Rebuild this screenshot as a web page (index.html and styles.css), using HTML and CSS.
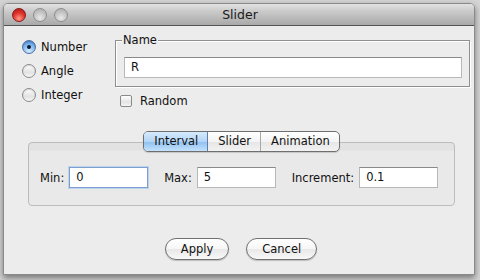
FILE: index.html
```html
<!DOCTYPE html>
<html>
<head>
<meta charset="utf-8">
<link rel="stylesheet" href="styles.css">
</head>
<body>
<div class="window">
  <div class="titlebar">
    <div class="lights">
      <span class="light red"></span>
      <span class="light"></span>
      <span class="light"></span>
    </div>
    <div class="title">Slider</div>
    <div class="spacer"></div>
  </div>
  <div class="content">
    <div class="top">
      <div class="radios">
        <div class="radio-row"><span class="radio checked"><span class="dot"></span></span><span class="lbl">Number</span></div>
        <div class="radio-row"><span class="radio"></span><span class="lbl">Angle</span></div>
        <div class="radio-row"><span class="radio"></span><span class="lbl">Integer</span></div>
      </div>
      <div class="right">
        <div class="group">
          <span class="legend">Name</span>
          <div class="field">R</div>
        </div>
        <div class="check-row"><span class="checkbox"></span><span class="lbl">Random</span></div>
      </div>
    </div>
    <div class="tabs-area">
      <div class="tabbar">
        <div class="tabs">
          <span class="tab active">Interval</span>
          <span class="tab">Slider</span>
          <span class="tab">Animation</span>
        </div>
      </div>
      <div class="panel">
        <div class="row">
          <span class="flabel">Min:</span><div class="field small focus">0</div>
          <span class="flabel">Max:</span><div class="field small">5</div>
          <span class="flabel">Increment:</span><div class="field small">0.1</div>
        </div>
      </div>
    </div>
    <div class="buttons">
      <span class="btn">Apply</span>
      <span class="btn">Cancel</span>
    </div>
  </div>
</div>
</body>
</html>
```
FILE: styles.css
```css
html, body {
  margin: 0;
  padding: 0;
}
body {
  width: 480px;
  height: 280px;
  background: #d4d4d4;
  font-family: "DejaVu Sans", sans-serif;
  font-size: 11.5px;
  color: #111;
  overflow: hidden;
}
.window {
  margin: 3px 0 0 3px;
  width: 472px;
  height: 272px;
  box-sizing: border-box;
  border: 1px solid #8a8a8a;
  border-radius: 5px 5px 0 0;
  background: #ececec;
  box-shadow: 0 3px 6px rgba(0,0,0,0.45);
}
.titlebar {
  height: 21px;
  border-bottom: 1px solid #555;
  border-radius: 4px 4px 0 0;
  background: linear-gradient(#e2e2e2, #cdcdcd 30%, #a9a9a9);
  display: grid;
  grid-template-columns: 1fr auto 1fr;
  align-items: center;
}
.lights {
  display: flex;
  gap: 7px;
  padding-left: 8px;
}
.light {
  width: 14px;
  height: 14px;
  border-radius: 50%;
  box-sizing: border-box;
  border: 1px solid #8e8e8e;
  background: radial-gradient(circle at 50% 75%, #e8e8e8 0, #c4c4c4 55%, #a8a8a8 100%);
}
.light.red {
  border-color: #8c1a1a;
  background: radial-gradient(circle at 50% 80%, #ff9a8a 0, #e0362c 50%, #a81414 100%);
}
.title {
  font-size: 12.5px;
  color: #1a1a1a;
  padding-left: 2px;
}
.content {
  display: flex;
  flex-direction: column;
}
.top {
  display: flex;
  padding: 14px 0 0 18px;
}
.radios {
  width: 93px;
  display: flex;
  flex-direction: column;
  gap: 10px;
}
.radio-row {
  display: flex;
  align-items: center;
  height: 14px;
  line-height: 14px;
}
.radio {
  width: 14px;
  height: 14px;
  box-sizing: border-box;
  border-radius: 50%;
  border: 1px solid #8a8a8a;
  background: linear-gradient(#ffffff, #e2e2e2 60%, #f6f6f6);
  box-shadow: inset 0 1px 1px rgba(0,0,0,0.15);
  margin-right: 5px;
  display: flex;
  align-items: center;
  justify-content: center;
  flex: none;
}
.radio.checked {
  border-color: #4a6fa5;
  background: radial-gradient(circle at 50% 85%, #d4ecff 0, #7fb6ec 55%, #3d7fd0 100%);
}
.dot {
  width: 4px;
  height: 4px;
  border-radius: 50%;
  background: #0d1a33;
}
.right {
  width: 355px;
}
.group {
  position: relative;
  height: 47px;
  box-sizing: border-box;
  border: 1px solid #8f8f8f;
  box-shadow: inset 1px 1px 0 #fff, 1px 1px 0 #fff;
  padding: 16px 7px 8px 8px;
}
.legend {
  position: absolute;
  top: -8px;
  left: 6px;
  padding: 0 1px;
  line-height: 15px;
  background: #ececec;
  color: #111;
}
.field {
  height: 21px;
  box-sizing: border-box;
  background: #fff;
  border: 1px solid #b8b8b8;
  border-top-color: #8a8a8a;
  padding-left: 6px;
  line-height: 19px;
  color: #111;
}
.check-row {
  display: flex;
  align-items: center;
  height: 12px;
  line-height: 12px;
  margin: 8px 0 0 5px;
}
.checkbox {
  width: 12px;
  height: 12px;
  box-sizing: border-box;
  border: 1px solid #8a8a8a;
  border-radius: 2px;
  background: linear-gradient(#ffffff, #e4e4e4 60%, #f4f4f4);
  margin-right: 8px;
  flex: none;
}
.tabs-area {
  margin: 24px 0 0 24px;
  width: 427px;
}
.tabbar {
  display: flex;
  justify-content: center;
  margin-bottom: -10px;
  position: relative;
  z-index: 1;
}
.tabs {
  display: flex;
  height: 21px;
  box-sizing: border-box;
  border: 1px solid #6f6f6f;
  border-radius: 5px;
  overflow: hidden;
  background: linear-gradient(#ffffff, #f4f4f4 50%, #e6e6e6 51%, #f2f2f2);
  box-shadow: 0 1px 1px rgba(0,0,0,0.15);
}
.tab {
  padding: 0 9px 0 10px;
  line-height: 19px;
  border-left: 1px solid #a8a8a8;
  color: #111;
}
.tab:first-child {
  border-left: none;
}
.tab.active {
  background: linear-gradient(#d6eafc, #b4d6f6 50%, #8ec0f0 51%, #c4e2fc);
  border-right: 1px solid #5c7fae;
}
.tab.active + .tab {
  border-left: none;
}
.panel {
  height: 64px;
  box-sizing: border-box;
  border: 1px solid #bcbcbc;
  border-radius: 4px;
  background: linear-gradient(#e2e2e2, #e2e2e2 7px, #e9e9e9 8px);
  padding: 24px 0 0 11px;
}
.row {
  display: flex;
  align-items: center;
  height: 21px;
}
.flabel {
  margin-right: 5px;
}
.field.small {
  width: 80px;
  height: 21px;
  margin-right: 16px;
}
.field.focus {
  border-color: #7d9fd0;
  box-shadow: 0 0 0 1px #bdd2ec;
}
.buttons {
  display: flex;
  justify-content: center;
  gap: 17px;
  margin-top: 32px;
  padding-left: 4px;
}
.btn {
  height: 22px;
  box-sizing: border-box;
  border: 1px solid #707070;
  border-radius: 11px;
  padding: 0 15px;
  line-height: 20px;
  background: linear-gradient(#ffffff, #f6f6f6 50%, #e8e8e8 51%, #f8f8f8);
  box-shadow: 0 1px 1px rgba(0,0,0,0.2);
  color: #111;
}
```
